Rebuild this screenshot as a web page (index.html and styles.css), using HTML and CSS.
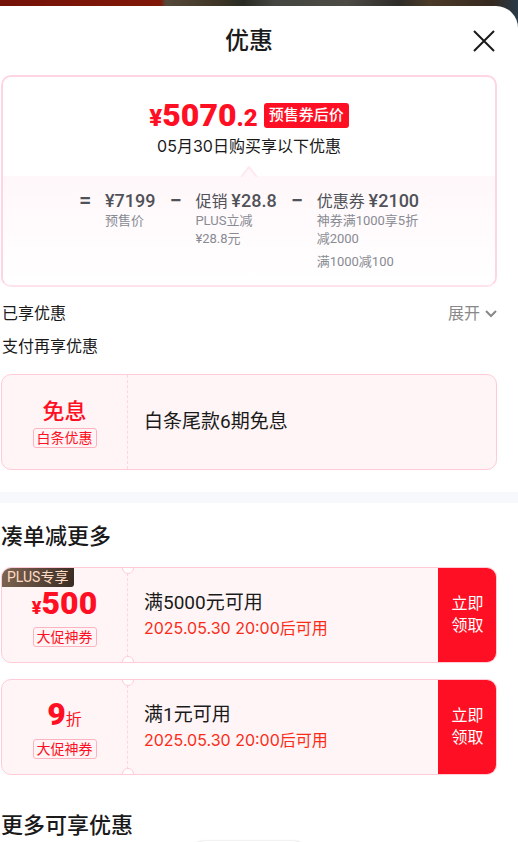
FILE: index.html
```html
<!DOCTYPE html>
<html lang="zh-CN">
<head>
    <meta charset="UTF-8">
    <meta name="viewport" content="width=device-width, initial-scale=1.0">
    <title>优惠</title>
    <link rel="stylesheet" href="styles.css">
</head>
<body>
    <main class="sheet">
        <header class="sheet-header">
            <h1 class="sheet-title">优惠</h1>
            <button class="close-button" type="button" aria-label="关闭">
                <svg width="22" height="22" viewBox="0 0 22 22" fill="none" stroke="#1a1a1a" stroke-width="2">
                    <path d="M1 1L21 21M21 1L1 21"/>
                </svg>
            </button>
        </header>

        <section class="price-card">
            <div class="price-top">
                <div class="price-row">
                    <span class="price"><span class="price-unit">¥</span>5070<span class="price-decimal">.2</span></span>
                    <span class="price-badge">预售券后价</span>
                </div>
                <p class="price-note">05月30日购买享以下优惠</p>
            </div>
            <div class="formula">
                <svg class="formula-arrow" width="16" height="11" viewBox="0 0 16 11">
                    <path d="M0 11L8 1L16 11" fill="#fff7f9" stroke="#ffe8ef" stroke-width="2"/>
                </svg>
                <span class="operator">=</span>
                <div class="formula-item">
                    <p class="formula-value"><b>¥7199</b></p>
                    <p class="formula-desc">预售价</p>
                </div>
                <span class="operator">−</span>
                <div class="formula-item">
                    <p class="formula-value">促销 <b>¥28.8</b></p>
                    <p class="formula-desc">PLUS立减<br>¥28.8元</p>
                </div>
                <span class="operator">−</span>
                <div class="formula-item">
                    <p class="formula-value">优惠券 <b>¥2100</b></p>
                    <p class="formula-desc">神券满1000享5折<br>减2000</p>
                    <p class="formula-desc">满1000减100</p>
                </div>
            </div>
        </section>

        <div class="rows">
            <div class="row">
                <h2 class="row-title">已享优惠</h2>
                <button class="expand-button" type="button">展开
                    <svg width="12" height="8" viewBox="0 0 12 8" fill="none" stroke="#888" stroke-width="2">
                        <path d="M1 1L6 6L11 1"/>
                    </svg>
                </button>
            </div>
            <div class="row">
                <h2 class="row-title">支付再享优惠</h2>
            </div>
        </div>

        <div class="coupons">
            <article class="coupon">
                <div class="coupon-stub">
                    <strong class="coupon-word">免息</strong>
                    <span class="coupon-tag">白条优惠</span>
                </div>
                <div class="coupon-body">
                    <h3 class="coupon-title">白条尾款6期免息</h3>
                </div>
            </article>
        </div>

        <div class="divider"></div>

        <h2 class="section-title">凑单减更多</h2>
        <div class="coupons">
            <article class="coupon notched">
                <span class="plus-badge">PLUS专享</span>
                <div class="coupon-stub">
                    <strong class="coupon-amount"><span class="coupon-unit">¥</span>500</strong>
                    <span class="coupon-tag">大促神券</span>
                </div>
                <div class="coupon-body">
                    <h3 class="coupon-title">满5000元可用</h3>
                    <p class="coupon-time">2025.05.30 20:00后可用</p>
                </div>
                <button class="claim-button" type="button">立即<br>领取</button>
            </article>
            <article class="coupon notched">
                <div class="coupon-stub">
                    <strong class="coupon-amount">9<span class="coupon-discount">折</span></strong>
                    <span class="coupon-tag">大促神券</span>
                </div>
                <div class="coupon-body">
                    <h3 class="coupon-title">满1元可用</h3>
                    <p class="coupon-time">2025.05.30 20:00后可用</p>
                </div>
                <button class="claim-button" type="button">立即<br>领取</button>
            </article>
        </div>

        <h2 class="section-title more-title">更多可享优惠</h2>
        <div class="bottom">
            <div class="floating-pill"></div>
        </div>
    </main>
</body>
</html>
```
FILE: styles.css
```css
* {
    box-sizing: border-box;
}
body {
    margin: 0;
    padding-top: 6px;
    height: 100vh;
    overflow: hidden;
    font-family: Roboto, "Noto Sans CJK SC", sans-serif;
    color: #1a1a1a;
    background: linear-gradient(90deg, #741208 0, #801808 31%, #54483a 32%, #3f3527 42%, #282b23 47%, #454641 53%, #4c4a45 67%, #2e2c28 77%, #4b3a28 83%, #35291f 95%, #293a48 100%);
}
h1, h2, h3, p {
    margin: 0;
    font-weight: 400;
}
button {
    padding: 0;
    border: none;
    background: none;
    font-family: inherit;
    cursor: pointer;
}
svg {
    display: block;
}
.sheet {
    min-height: 100vh;
    background: #fff;
    border-top-right-radius: 22px;
    padding-top: 1px;
}
.sheet-header {
    display: grid;
    grid-template-columns: 1fr auto 1fr;
    align-items: center;
    height: 68px;
    padding: 0 23px 0 3px;
}
.sheet-title {
    grid-column: 2;
    font-size: 24px;
    line-height: 36px;
    font-weight: 500;
}
.close-button {
    justify-self: end;
}

/* price summary */
.price-card {
    margin: 0 21px 0 1px;
    border: 2px solid #ffd5e1;
    border-bottom-color: #ffe3ec;
    border-radius: 10px;
}
.price-top {
    padding: 23px 0 19px;
    text-align: center;
}
.price-row {
    display: flex;
    justify-content: center;
    align-items: center;
    gap: 6px;
    height: 30px;
    margin-bottom: 5px;
}
.price {
    padding-top: 3px;
    color: #ff0f23;
    font-size: 32px;
    line-height: 30px;
    font-weight: 900;
}
.price-unit,
.price-decimal {
    font-size: 24px;
}
.price-badge {
    padding: 0 5px;
    border-radius: 3px;
    background: #ff0f23;
    color: #fff;
    font-size: 15px;
    line-height: 25px;
    font-weight: 500;
}
.price-note {
    font-family: Inter, "Noto Sans CJK SC", sans-serif;
    font-size: 16px;
    line-height: 22px;
}
.formula {
    position: relative;
    display: flex;
    justify-content: center;
    gap: 14px;
    padding: 15px 0 14px;
    background: linear-gradient(#fff7f9, #fff);
    border-radius: 0 0 8px 8px;
    color: #505259;
}
.formula-arrow {
    position: absolute;
    top: -10px;
    left: calc(50% - 8px);
}
.operator {
    width: 12px;
    text-align: center;
    font-size: 22px;
    line-height: 20px;
    font-weight: 500;
}
.formula-value {
    font-size: 16px;
    line-height: 20px;
}
.formula-value b {
    font-size: 18px;
    font-weight: 500;
}
.formula-desc {
    margin-bottom: 5px;
    color: #888b94;
    font-size: 13px;
    line-height: 18px;
}
.formula-desc:last-child {
    margin-bottom: 0;
}

/* rows */
.rows {
    display: flex;
    flex-direction: column;
    gap: 9px;
    padding: 15px 21px 15px 2px;
}
.row {
    display: flex;
    justify-content: space-between;
    align-items: center;
}
.row-title {
    font-size: 16px;
    line-height: 24px;
}
.expand-button {
    display: flex;
    align-items: center;
    gap: 5px;
    color: #888;
    font-size: 16px;
    line-height: 24px;
}

/* coupons */
.coupons {
    display: flex;
    flex-direction: column;
    gap: 16px;
    margin: 0 21px 0 1px;
}
.coupon {
    position: relative;
    display: flex;
    height: 96px;
    border: 1px solid #ffcbd6;
    border-radius: 10px;
    background: #fff5f6;
    overflow: hidden;
}
.coupon-stub {
    display: flex;
    flex-direction: column;
    align-items: center;
    justify-content: center;
    width: 126px;
    border-right: 1px dashed #ffd5de;
    color: #ff0f23;
}
/* small bites cut out at both ends of the dashed line */
.notched::before,
.notched::after {
    content: "";
    position: absolute;
    left: 120px;
    width: 10px;
    height: 10px;
    border: 1px solid #ffcbd6;
    border-radius: 50%;
    background: #fff;
}
.notched::before {
    top: -6px;
}
.notched::after {
    bottom: -6px;
}
.coupon-word {
    font-size: 22px;
    line-height: 32px;
    font-weight: 500;
}
.coupon-amount {
    font-size: 32px;
    line-height: 38px;
    font-weight: 900;
}
.coupon-unit {
    font-size: 18px;
}
.coupon-discount {
    font-size: 16px;
    font-weight: 400;
}
.coupon-tag {
    padding: 0 3px;
    border: 1px solid #ffb3bf;
    border-radius: 3px;
    font-size: 14px;
    line-height: 18px;
}
.coupon-body {
    flex: 1;
    display: flex;
    flex-direction: column;
    justify-content: center;
    padding-left: 16px;
}
.coupon-title {
    font-size: 19px;
    line-height: 26px;
}
.coupon-time {
    color: #fa2c19;
    font-family: Inter, "Noto Sans CJK SC", sans-serif;
    font-size: 16px;
    line-height: 24px;
}
.claim-button {
    width: 59px;
    margin: -1px;
    background: #ff0f23;
    color: #fff;
    font-size: 16px;
    line-height: 22px;
}
.plus-badge {
    position: absolute;
    top: -1px;
    left: -1px;
    padding: 0 6px;
    border-radius: 0 0 3px 0;
    background: linear-gradient(100deg, #806653, #392b23);
    color: #ffdcc4;
    font-size: 14px;
    line-height: 20px;
}
.divider {
    height: 11px;
    margin-top: 22px;
    background: #f6f8fc;
}
.section-title {
    padding: 19px 0 15px 1px;
    font-size: 22px;
    line-height: 30px;
    font-weight: 500;
}
.more-title {
    padding: 36px 0 0 1px;
}
.bottom {
    display: flex;
    justify-content: center;
    padding-right: 21px;
}
.floating-pill {
    width: 124px;
    height: 36px;
    border-radius: 18px;
    background: #fff;
    box-shadow: 0 0 2px rgba(0, 0, 0, 0.2);
}
```
